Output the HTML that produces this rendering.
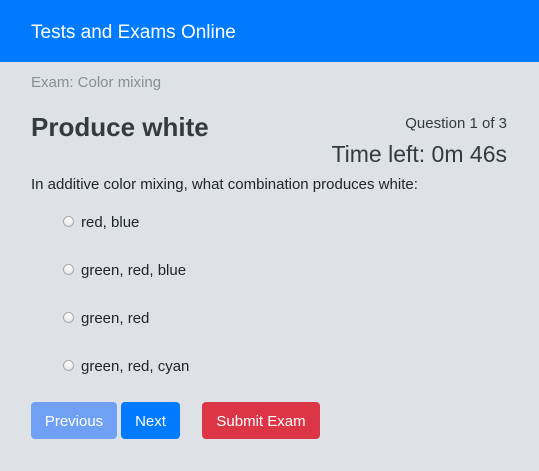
<!DOCTYPE html>
<html><head><style>
body{margin:0;width:539px;height:471px;background:#dee2e6;font-family:"Liberation Sans",sans-serif;color:#212529;position:relative;overflow:hidden}
.a{position:absolute;white-space:nowrap}
.hdr{left:0;top:0;width:539px;height:62px;background:#007bff}
.btn{position:absolute;top:402px;height:37px;border-radius:4px;color:#fff;font-size:15px;line-height:39px;text-align:center}
.r{width:11px;height:11px;border-radius:50%;border:1px solid #aaa;background:linear-gradient(#fff,#e6e6e6);box-sizing:border-box}
.opt{font-size:15px;left:81px}
</style></head><body>
<div class="a hdr"></div>
<div class="a" style="left:31px;top:22px;font-size:19px;color:#fff">Tests and Exams Online</div>
<div class="a" style="left:31px;top:74px;font-size:15px;color:#868e96">Exam: Color mixing</div>
<div class="a" style="left:31px;top:112px;font-size:26px;font-weight:bold;color:#343a40">Produce white</div>
<div class="a" style="right:32px;top:115px;font-size:15px;color:#343a40">Question 1 of 3</div>
<div class="a" style="right:32px;top:141px;font-size:23px;color:#343a40">Time left: 0m 46s</div>
<div class="a" style="left:31px;top:176px;font-size:15px">In additive color mixing, what combination produces white:</div>
<div class="a r" style="left:63px;top:216px"></div><div class="a opt" style="top:214px">red, blue</div>
<div class="a r" style="left:63px;top:264px"></div><div class="a opt" style="top:262px">green, red, blue</div>
<div class="a r" style="left:63px;top:312px"></div><div class="a opt" style="top:310px">green, red</div>
<div class="a r" style="left:63px;top:360px"></div><div class="a opt" style="top:358px">green, red, cyan</div>
<div class="btn" style="left:31px;width:86px;background:#6fa0f3">Previous</div>
<div class="btn" style="left:121px;width:59px;background:#007bff">Next</div>
<div class="btn" style="left:202px;width:118px;background:#dc3545">Submit Exam</div>
</body></html>
